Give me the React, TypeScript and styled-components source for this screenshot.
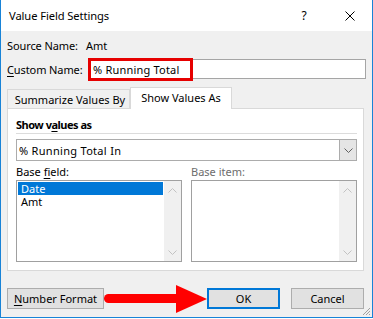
import styled, { createGlobalStyle } from 'styled-components';

const GlobalStyle = createGlobalStyle`
  html, body {
    margin: 0;
    padding: 0;
    background: #ffffff;
  }
  body {
    font-family: "Noto Sans", "Segoe UI", sans-serif;
    font-size: 11px;
    letter-spacing: 0;
    color: #000000;
  }
  * {
    box-sizing: border-box;
  }
`;

const Window = styled.div`
  position: relative;
  width: 373px;
  height: 318px;
  border: 1px solid #1883d7;
  border-top: none;
  background: #f0f0f0;
  display: flex;
  flex-direction: column;
`;

const TitleBar = styled.div`
  height: 31px;
  background: #ffffff;
  display: flex;
  align-items: center;
  padding-left: 8px;
`;

const Title = styled.div`
  flex: 1;
  font-size: 11.2px;
  letter-spacing: -0.1px;
`;

const TitleButton = styled.div<{ $w: number }>`
  width: ${(p) => p.$w}px;
  height: 31px;
  display: flex;
  align-items: center;
  justify-content: center;
  font-size: 12px;
`;

const Body = styled.div`
  flex: 1;
  display: flex;
  flex-direction: column;
  padding: 4px 6px 0 6px;
`;

const FieldRow = styled.div<{ $top: number }>`
  display: flex;
  align-items: center;
  height: 20px;
  margin-top: ${(p) => p.$top}px;
`;

const FieldLabel = styled.div<{ $w: number }>`
  width: ${(p) => p.$w}px;
  white-space: nowrap;
  letter-spacing: -0.1px;
`;

const TextInput = styled.div`
  flex: 1;
  height: 20px;
  border: 1px solid #a5a5a5;
  background: #ffffff;
  padding-left: 2px;
  display: flex;
  align-items: center;
  letter-spacing: 0.2px;
`;

const Key = styled.span`
  text-decoration: underline;
  text-underline-offset: 2px;
`;

const TabRow = styled.div`
  display: flex;
  align-items: flex-end;
  height: 21px;
  margin-top: 8px;
  margin-right: 2px;
`;

const Tab = styled.div<{ $active?: boolean; $w: number }>`
  position: relative;
  z-index: 1;
  width: ${(p) => p.$w}px;
  height: ${(p) => (p.$active ? 22 : 19)}px;
  margin-bottom: ${(p) => (p.$active ? -1 : 0)}px;
  border: 1px solid #d9d9d9;
  border-bottom: none;
  background: ${(p) => (p.$active ? '#ffffff' : '#f0f0f0')};
  display: flex;
  align-items: center;
  justify-content: center;
  padding-bottom: ${(p) => (p.$active ? 2 : 0)}px;
  padding-left: ${(p) => (p.$active ? 0 : 3)}px;
  white-space: nowrap;
`;

const Panel = styled.div`
  height: 163px;
  margin-right: 2px;
  border: 1px solid #d9d9d9;
  background: #ffffff;
  padding: 8px 6px 8px 8px;
  display: flex;
  flex-direction: column;
`;

const SectionHeading = styled.div`
  height: 17px;
  line-height: 16px;
  font-weight: 700;
  letter-spacing: -0.5px;
  border-bottom: 1px solid #dcdcdc;
`;

const Dropdown = styled.div`
  margin-top: 5px;
  height: 22px;
  border: 1px solid #acacac;
  display: flex;
  align-items: stretch;
`;

const DropdownValue = styled.div`
  flex: 1;
  display: flex;
  align-items: center;
  padding-left: 2px;
  letter-spacing: 0.3px;
`;

const DropdownButton = styled.div`
  width: 17px;
  background: #e5e5e5;
  border-left: 1px solid #acacac;
  display: flex;
  align-items: center;
  justify-content: center;
`;

const FieldGrid = styled.div`
  margin-top: 3px;
  display: grid;
  grid-template-columns: 166px 166px;
  grid-template-rows: 16px 82px;
  column-gap: 9px;
`;

const GridLabel = styled.div<{ $disabled?: boolean }>`
  line-height: 16px;
  color: ${(p) => (p.$disabled ? '#6d6d6d' : '#000000')};
`;

const ListBox = styled.div`
  border: 1px solid #a0a0a0;
  background: #ffffff;
  display: flex;
`;

const ListItems = styled.div`
  flex: 1;
  padding: 1px;
`;

const ListItem = styled.div<{ $selected?: boolean }>`
  height: 13px;
  line-height: 13px;
  padding-left: 3px;
  background: ${(p) => (p.$selected ? '#0078d7' : 'transparent')};
  color: ${(p) => (p.$selected ? '#ffffff' : '#000000')};
`;

const ScrollBar = styled.div`
  width: 17px;
  background: #f0f0f0;
  display: flex;
  flex-direction: column;
  justify-content: space-between;
  align-items: center;
  padding: 7px 0 6px;
`;

const ButtonRow = styled.div`
  margin-top: 17px;
  margin-right: 2px;
  display: flex;
  justify-content: space-between;
`;

const ButtonGroup = styled.div`
  display: flex;
  gap: 11px;
`;

const Button = styled.div<{ $w: number; $default?: boolean }>`
  width: ${(p) => p.$w}px;
  height: 21px;
  border: ${(p) => (p.$default ? '2px solid #0078d7' : '1px solid #adadad')};
  background: #e1e1e1;
  display: flex;
  align-items: center;
  justify-content: center;
  white-space: nowrap;
`;

const Highlight = styled.div`
  position: absolute;
  left: 87px;
  top: 58px;
  width: 105px;
  height: 23px;
  border: 3px solid #e60000;
  pointer-events: none;
`;

const Arrow = styled.svg`
  position: absolute;
  left: 103px;
  top: 284px;
  pointer-events: none;
`;

const Grip = styled.svg`
  position: absolute;
  right: 1px;
  bottom: 1px;
`;

const Chevron = ({ up, color }: { up?: boolean; color: string }) => (
  <svg width="9" height="5" viewBox="0 0 9 5">
    <polyline
      points={up ? '0.5,4.5 4.5,0.5 8.5,4.5' : '0.5,0.5 4.5,4.5 8.5,0.5'}
      fill="none"
      stroke={color}
      strokeWidth="1"
    />
  </svg>
);

const App = () => {
  return (
    <>
      <GlobalStyle />
      <Window>
        <TitleBar>
          <Title>Value Field Settings</Title>
          <TitleButton $w={46}>?</TitleButton>
          <TitleButton $w={45}>
            <svg width="10" height="10" viewBox="0 0 10 10">
              <path d="M0.5 0.5 L9.5 9.5 M9.5 0.5 L0.5 9.5" stroke="#000" strokeWidth="1" />
            </svg>
          </TitleButton>
        </TitleBar>

        <Body>
          <FieldRow $top={0}>
            <FieldLabel $w={79}>Source Name:</FieldLabel>
            <span>Amt</span>
          </FieldRow>
          <FieldRow $top={4}>
            <FieldLabel $w={83}>
              <Key>C</Key>ustom Name:
            </FieldLabel>
            <TextInput>% Running Total</TextInput>
          </FieldRow>

          <TabRow>
            <Tab $w={123}>Summarize Values By</Tab>
            <Tab $w={102} $active>
              Show Values As
            </Tab>
          </TabRow>
          <Panel>
            <SectionHeading>
              Show v<Key>a</Key>lues as
            </SectionHeading>
            <Dropdown>
              <DropdownValue>% Running Total In</DropdownValue>
              <DropdownButton>
                <Chevron color="#606060" />
              </DropdownButton>
            </Dropdown>
            <FieldGrid>
              <GridLabel>
                Base <Key>f</Key>ield:
              </GridLabel>
              <GridLabel $disabled>Base item:</GridLabel>
              <ListBox>
                <ListItems>
                  <ListItem $selected>Date</ListItem>
                  <ListItem>Amt</ListItem>
                </ListItems>
                <ScrollBar>
                  <Chevron up color="#c2c2c2" />
                  <Chevron color="#c2c2c2" />
                </ScrollBar>
              </ListBox>
              <ListBox>
                <ListItems />
                <ScrollBar>
                  <Chevron up color="#c2c2c2" />
                  <Chevron color="#c2c2c2" />
                </ScrollBar>
              </ListBox>
            </FieldGrid>
          </Panel>

          <ButtonRow>
            <Button $w={97}>
              <span>
                <Key>N</Key>umber Format
              </span>
            </Button>
            <ButtonGroup>
              <Button $w={73} $default>
                OK
              </Button>
              <Button $w={73}>Cancel</Button>
            </ButtonGroup>
          </ButtonRow>
        </Body>

        <Highlight />
        <Arrow width="104" height="30" viewBox="0 0 104 30">
          <rect x="0" y="10" width="76" height="9" rx="4.5" fill="#ff0000" />
          <polygon points="72,1 103,15 72,29" fill="#ff0000" />
        </Arrow>
        <Grip width="9" height="9" viewBox="0 0 9 9">
          <path d="M8 1 L1 8 M8 4 L4 8 M8 7 L7 8" stroke="#a0a0a0" strokeWidth="1" />
        </Grip>
      </Window>
    </>
  );
};

export default App;
